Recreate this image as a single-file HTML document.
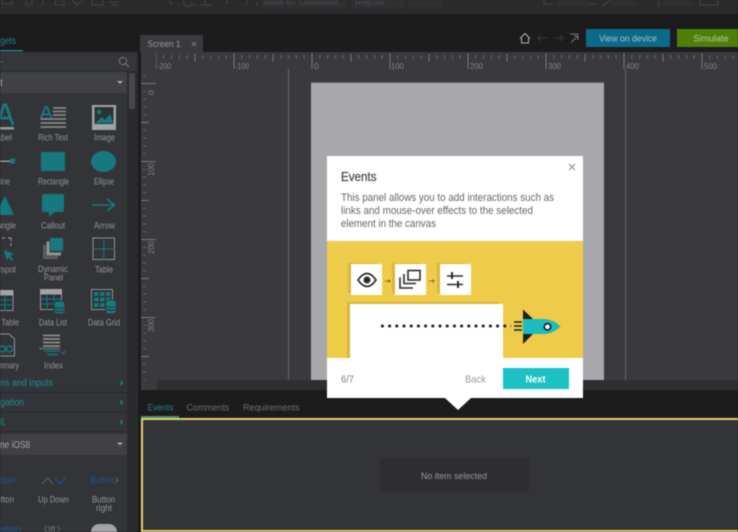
<!DOCTYPE html>
<html><head><meta charset="utf-8"><title>Events</title>
<style>
html,body{margin:0;padding:0;width:738px;height:532px;overflow:hidden;background:#1c1c1d}
svg{display:block;position:absolute;left:0;top:0;filter:blur(.45px)}
text{font-family:"Liberation Sans",sans-serif}
.l{font-size:9px;fill:#939496}
.t{font-size:10.5px;fill:#1f8f90}
.r{font-size:8.5px;fill:#838387}
</style></head><body>
<svg width="738" height="532" viewBox="0 0 738 532" xmlns="http://www.w3.org/2000/svg">
<defs>
<pattern id="hm" x="311.5" y="0" width="7.8" height="10" patternUnits="userSpaceOnUse"><rect width="1" height="10" fill="#636367"/></pattern>
<pattern id="h5" x="311.5" y="0" width="39" height="10" patternUnits="userSpaceOnUse"><rect width="1" height="10" fill="#77777b"/></pattern>
<pattern id="h1" x="311.5" y="0" width="78" height="20" patternUnits="userSpaceOnUse"><rect width="1" height="20" fill="#77777b"/></pattern>
<pattern id="vm" x="0" y="83" width="10" height="7.8" patternUnits="userSpaceOnUse"><rect width="10" height="1" fill="#636367"/></pattern>
<pattern id="v5" x="0" y="83" width="10" height="39" patternUnits="userSpaceOnUse"><rect width="10" height="1" fill="#77777b"/></pattern>
<pattern id="v1" x="0" y="83" width="20" height="78" patternUnits="userSpaceOnUse"><rect width="20" height="1" fill="#77777b"/></pattern>
</defs>

<!-- backgrounds -->
<rect width="738" height="532" fill="#1c1c1d"/>
<rect width="738" height="14" fill="#2b2b2d"/>

<!-- top toolbar -->
<g fill="none" stroke="#414144" stroke-width="1.2">
<path d="M2 0V4H12V0M26 0V5L32 4V0M43 0V5M55 0H64V5H55ZM72 0L78 5M84 0L76 5M92 0V5H103V0M110 2H118M112 5H118"/>
<path d="M169 0L172 5M184 0A4 4 0 0 0 192 4L196 6M205 0V4M200 5H212"/>
<path d="M227 0V4M247 0V5M257 2V6M268 0V4"/>
<path d="M544 0V4H552M566 0V4H570M587 4H597M610 0L603 6M636 0V5M660 0A5 5 0 0 0 659 7M700 0V5H718V0"/>
</g>
<rect x="261" y="0" width="84" height="8" fill="#303033"/>
<rect x="352" y="0" width="52" height="8" fill="#303033"/>
<rect x="408" y="0" width="34" height="8" fill="#303033"/>
<rect x="558" y="0" width="30" height="6" fill="#303033"/>
<rect x="611" y="0" width="26" height="6" fill="#303033"/>
<rect x="663" y="0" width="30" height="6" fill="#303033"/>
<text x="264" y="5" font-size="8.5" fill="#4a4a4e" textLength="74" lengthAdjust="spacingAndGlyphs">Abadi MT Condensed</text>
<text x="355" y="5" font-size="8.5" fill="#4a4a4e">Regular</text>

<!-- left panel -->
<text x="0" y="44" font-size="10.5" fill="#1a8485" textLength="16" lengthAdjust="spacingAndGlyphs">gets</text>
<rect x="0" y="50" width="23" height="1.500" fill="#1a8485"/>
<rect x="0" y="52" width="138" height="480" fill="#2a2b2e"/>
<rect x="0" y="52" width="137" height="19" fill="#353639"/>
<rect x="0" y="72" width="127" height="460" fill="#333438"/>
<rect x="0" y="72" width="127" height="21" fill="#404144"/>
<path d="M0 62H3" stroke="#157b7c" stroke-width="1"/>
<circle cx="123" cy="61" r="3.600" fill="none" stroke="#77787a" stroke-width="1"/><path d="M125.600 63.600L129 67" stroke="#77787a" stroke-width="1"/>
<text x="0" y="86" font-size="10" fill="#a4a5a7">t</text>
<path d="M117 81H123L120 84Z" fill="#a4a5a7"/>
<rect x="129" y="73" width="6" height="36" fill="#47484b"/>

<!-- row 1 -->
<path d="M-3 125L4 105H6L13 125M0 118H10" fill="none" stroke="#17797f" stroke-width="2.800"/>
<rect x="0" y="127" width="14" height="2.500" fill="#97989a"/>
<text x="-8" y="140.500" class="l" textLength="20" lengthAdjust="spacingAndGlyphs">Label</text>
<path d="M41 118L45.500 107H47L51.500 118M43 114.500H49.500" fill="none" stroke="#17797f" stroke-width="1.900"/>
<path d="M53 108H66M53 111.500H66M53 115H66M40.500 119H66M40.500 123H66M40.500 127H66" stroke="#8f9092" stroke-width="1.600"/>
<text x="38" y="140.500" class="l" textLength="30" lengthAdjust="spacingAndGlyphs">Rich Text</text>
<rect x="92" y="105" width="24" height="25" fill="#a2a3a5"/>
<rect x="94.500" y="107" width="19" height="17" fill="#2c3336"/>
<path d="M95 123L102 117L105 120L110 114L113.500 123Z" fill="#17797f"/><circle cx="99" cy="112" r="2.200" fill="#17797f"/>
<text x="94" y="140.500" class="l" textLength="21" lengthAdjust="spacingAndGlyphs">Image</text>

<!-- row 2 -->
<rect x="0" y="160.500" width="11" height="1.500" fill="#97989a"/><rect x="10" y="158.500" width="5" height="5" fill="#17797f"/>
<text x="-4" y="184.500" class="l" textLength="14" lengthAdjust="spacingAndGlyphs">Line</text>
<rect x="41" y="152" width="24" height="19" fill="#17797f"/>
<text x="38" y="184.500" class="l" textLength="31" lengthAdjust="spacingAndGlyphs">Rectangle</text>
<ellipse cx="103.500" cy="161.500" rx="12.500" ry="10.500" fill="#17797f"/>
<text x="94" y="184.500" class="l" textLength="20" lengthAdjust="spacingAndGlyphs">Ellipse</text>

<!-- row 3 -->
<path d="M-5 215L5 196L14 215Z" fill="#17797f"/>
<text x="-11" y="228.500" class="l" textLength="27" lengthAdjust="spacingAndGlyphs">Triangle</text>
<path d="M44 194H62Q64 194 64 196V210Q64 212 62 212H55L49 216.500V212H44Q42 212 42 210V196Q42 194 44 194Z" fill="#17797f"/>
<text x="41" y="228.500" class="l" textLength="24" lengthAdjust="spacingAndGlyphs">Callout</text>
<path d="M92 205H114M107 199L114.500 205L107 211" fill="none" stroke="#17797f" stroke-width="1.600"/>
<text x="94" y="228.500" class="l" textLength="21" lengthAdjust="spacingAndGlyphs">Arrow</text>

<!-- row 4 -->
<path d="M2 238H5M8 238H11V241M11 243V246" fill="none" stroke="#8f9092" stroke-width="1.200"/>
<path d="M4 250L14 254L10 256L13.500 260L12 261L8.500 257L7 261Z" fill="#17797f"/>
<text x="-11" y="272.500" class="l" textLength="27" lengthAdjust="spacingAndGlyphs">Hotspot</text>
<path d="M43 245H46V256H58V259H43Z" fill="#5b5c5f"/>
<path d="M46.500 241.500H49.500V252.500H61V255.500H46.500Z" fill="#929395"/>
<rect x="50" y="238" width="13" height="13" fill="#17797f"/>
<text x="38" y="272" class="l" textLength="30" lengthAdjust="spacingAndGlyphs">Dynamic</text>
<text x="44" y="280.500" class="l" textLength="19" lengthAdjust="spacingAndGlyphs">Panel</text>
<rect x="93" y="238" width="21.500" height="21.500" fill="none" stroke="#8f9092" stroke-width="1"/>
<path d="M103.800 238V260M93 249H115" stroke="#17797f" stroke-width="1"/>
<text x="95" y="272.500" class="l" textLength="18" lengthAdjust="spacingAndGlyphs">Table</text>

<!-- row 5 -->
<rect x="-6" y="290.500" width="19" height="20" fill="#2c3336" stroke="#8f9092"/>
<rect x="-6" y="290" width="19" height="5.500" fill="#a2a3a5"/>
<path d="M-6 300H13M-6 305H13M5 295V311" stroke="#17797f"/>
<text x="-31" y="325.500" class="l" textLength="50" lengthAdjust="spacingAndGlyphs">Repeater Table</text>
<rect x="40.500" y="289.500" width="21" height="20" fill="#2c3336" stroke="#8f9092"/>
<rect x="40" y="289" width="22" height="5.500" fill="#a2a3a5"/>
<path d="M41 299H62M41 304H62M47 295V310M54 295V310" stroke="#17797f"/>
<path d="M54 304Q54 301 59.500 301Q65 301 65 304V312Q65 314 59.500 314Q54 314 54 312Z" fill="#17797f" stroke="#333438"/>
<path d="M54 307Q59.500 310 65 307M54 310Q59.500 313 65 310" fill="none" stroke="#333438"/>
<text x="39" y="325.500" class="l" textLength="28" lengthAdjust="spacingAndGlyphs">Data List</text>
<rect x="91.500" y="289.500" width="21" height="20" fill="#2c3336" stroke="#8f9092"/>
<g fill="#17797f"><rect x="94" y="292" width="4.500" height="4"/><rect x="100" y="292" width="4.500" height="4"/><rect x="106" y="292" width="4.500" height="4"/><rect x="94" y="297.500" width="4.500" height="4"/><rect x="100" y="297.500" width="4.500" height="4"/><rect x="106" y="297.500" width="4.500" height="4"/><rect x="94" y="303" width="4.500" height="4"/><rect x="100" y="303" width="4.500" height="4"/></g>
<path d="M105.500 303Q105.500 300 111 300Q116.500 300 116.500 303V311Q116.500 314 111 314Q105.500 314 105.500 311Z" fill="#17797f" stroke="#333438"/>
<path d="M105.500 306Q111 309 116.500 306M105.500 309Q111 312 116.500 309" fill="none" stroke="#333438"/>
<text x="88" y="325.500" class="l" textLength="32" lengthAdjust="spacingAndGlyphs">Data Grid</text>

<!-- row 6 -->
<path d="M-3 334H9L14.500 339V356H-3Z" fill="none" stroke="#8f9092" stroke-width="1"/>
<circle cx="2.500" cy="349" r="3" fill="none" stroke="#17797f" stroke-width="1.500"/><circle cx="9.500" cy="349" r="3" fill="none" stroke="#17797f" stroke-width="1.500"/>
<text x="-11" y="368.500" class="l" textLength="30" lengthAdjust="spacingAndGlyphs">Summary</text>
<path d="M43 335.500H60M43 339H60M43 342.500H60M43 346H60" stroke="#97989a" stroke-width="1.600"/>
<path d="M39 348.500H60" stroke="#6b6c6e" stroke-width="1.500"/>
<path d="M44 351H60M47 354.500H58" stroke="#17797f" stroke-width="1.500"/>
<path d="M61 352L63 354L66 350" fill="none" stroke="#17797f"/>
<text x="44" y="368.500" class="l" textLength="19" lengthAdjust="spacingAndGlyphs">Index</text>

<!-- sections -->
<path d="M0 392.500H127M0 412H127M0 431.500H127" stroke="#292a2c" stroke-width="1"/>
<text x="0" y="386" class="t" textLength="53" lengthAdjust="spacingAndGlyphs">ns and inputs</text>
<text x="0" y="405.500" class="t" textLength="24" lengthAdjust="spacingAndGlyphs">gation</text>
<text x="0" y="425" class="t" textLength="6" lengthAdjust="spacingAndGlyphs">IL</text>
<path d="M120.500 380V386L123.500 383ZM120.500 399.500V405.500L123.500 402.500ZM120.500 419V425L123.500 422Z" fill="#157b7c"/>
<rect x="0" y="434" width="127" height="21" fill="#404144"/>
<text x="0" y="448" font-size="10.500" fill="#a4a5a7" textLength="30" lengthAdjust="spacingAndGlyphs">ne iOS8</text>
<path d="M117 442.500H123L120 445.500Z" fill="#a4a5a7"/>

<!-- iOS row -->
<text x="0" y="483" font-size="9.500" fill="#1f5493" textLength="15" lengthAdjust="spacingAndGlyphs">tton</text>
<path d="M42 484L47.500 478L53 484" fill="none" stroke="#5d5e60" stroke-width="1"/>
<path d="M54.500 478L60 484L65.500 478" fill="none" stroke="#1f5493" stroke-width="1"/>
<text x="90" y="483" font-size="9.500" fill="#1f5493" textLength="24" lengthAdjust="spacingAndGlyphs">Button</text>
<path d="M115 477.500L118 480L115 483" fill="none" stroke="#5d5e60"/>
<text x="-9" y="502.500" class="l" textLength="23" lengthAdjust="spacingAndGlyphs">Button</text>
<text x="38" y="502.500" class="l" textLength="31" lengthAdjust="spacingAndGlyphs">Up Down</text>
<text x="92" y="502.500" class="l" textLength="23" lengthAdjust="spacingAndGlyphs">Button</text>
<text x="96" y="511" class="l" textLength="16" lengthAdjust="spacingAndGlyphs">right</text>
<text x="0" y="532" font-size="9.500" fill="#1f5493">utton</text>
<text x="44" y="532" font-size="8.500" fill="#77787a">Off</text><path d="M57 526L60 529L57 532" fill="none" stroke="#5d5e60"/>
<rect x="91" y="524" width="26" height="16" rx="8" fill="#a2a3a5"/>

<!-- tab bar & canvas -->
<rect x="140" y="35" width="63" height="17" fill="#3a3a3e"/>
<text x="147.500" y="47" font-size="9.500" fill="#9a9a9d" textLength="33" lengthAdjust="spacingAndGlyphs">Screen 1</text>
<path d="M192 42L196 46M196 42L192 46" stroke="#8a8a8d" stroke-width=".8"/>
<rect x="141" y="52" width="597" height="328" fill="#3a393e"/>

<!-- rulers -->
<rect x="156" y="55" width="582" height="4" fill="url(#hm)"/>
<rect x="156" y="54" width="582" height="8" fill="url(#h5)"/>
<rect x="156" y="53" width="582" height="16" fill="url(#h1)"/>
<rect x="143" y="70" width="3" height="310" fill="url(#vm)"/>
<rect x="141" y="70" width="8" height="310" fill="url(#v5)"/>
<rect x="141" y="70" width="15" height="310" fill="url(#v1)"/>
<text x="157" y="69" class="r" textLength="14" lengthAdjust="spacingAndGlyphs">-200</text>
<text x="235" y="69" class="r" textLength="14" lengthAdjust="spacingAndGlyphs">-100</text>
<text x="314" y="69" class="r">0</text>
<text x="391" y="69" class="r" textLength="13" lengthAdjust="spacingAndGlyphs">100</text>
<text x="470" y="69" class="r" textLength="13" lengthAdjust="spacingAndGlyphs">200</text>
<text x="548" y="69" class="r" textLength="13" lengthAdjust="spacingAndGlyphs">300</text>
<text x="626" y="69" class="r" textLength="13" lengthAdjust="spacingAndGlyphs">400</text>
<text x="704" y="69" class="r" textLength="13" lengthAdjust="spacingAndGlyphs">500</text>
<text transform="translate(154,176) rotate(-90)" class="r" textLength="13" lengthAdjust="spacingAndGlyphs">100</text>
<text transform="translate(154,254) rotate(-90)" class="r" textLength="13" lengthAdjust="spacingAndGlyphs">200</text>
<text transform="translate(154,332) rotate(-90)" class="r" textLength="13" lengthAdjust="spacingAndGlyphs">300</text>
<text transform="translate(154,95) rotate(-90)" class="r">0</text>

<!-- guides + page -->
<path d="M288.500 69V380M625.500 69V380" stroke="#69696d" stroke-width="1"/>
<rect x="311" y="83" width="293" height="297" fill="#a8a7ac"/>
<rect x="311" y="82" width="293" height="1" fill="#5e5e62"/>

<!-- bottom strips -->
<rect x="141" y="380" width="597" height="10" fill="#2f2f31"/>
<rect x="141" y="380" width="16" height="10" fill="#3a393e"/>
<rect x="141" y="390" width="597" height="28" fill="#1c1c1d"/>
<text x="147.500" y="410.500" font-size="9.500" fill="#1a8485" textLength="26" lengthAdjust="spacingAndGlyphs">Events</text>
<text x="186.500" y="410.500" font-size="9.500" fill="#6d6e70" textLength="43" lengthAdjust="spacingAndGlyphs">Comments</text>
<text x="243" y="410.500" font-size="9.500" fill="#6d6e70" textLength="56.500" lengthAdjust="spacingAndGlyphs">Requirements</text>
<rect x="141" y="416" width="38" height="2" fill="#3f8f78"/>

<!-- yellow frame -->
<rect x="142" y="419" width="600" height="112" fill="#333438" stroke="#e4cf6c" stroke-width="2"/>
<rect x="380" y="458" width="149" height="34" fill="#2e2e30"/>
<text x="421" y="479" font-size="9" fill="#98989b" textLength="66" lengthAdjust="spacingAndGlyphs">No item selected</text>

<!-- modal -->
<rect x="327" y="156" width="256" height="242" fill="#fff"/>
<path d="M445 398H471L458 410Z" fill="#fff"/>
<text x="341" y="181" font-size="13" fill="#4b4b50" stroke="#4b4b50" stroke-width=".25" textLength="35.500" lengthAdjust="spacingAndGlyphs">Events</text>
<path d="M569 164L575 170M575 164L569 170" stroke="#85858a" stroke-width=".9"/>
<g font-size="11" fill="#66666b">
<text x="341" y="201" textLength="213" lengthAdjust="spacingAndGlyphs">This panel allows you to add interactions such as</text>
<text x="341" y="214" textLength="192" lengthAdjust="spacingAndGlyphs">links and mouse-over effects to the selected</text>
<text x="341" y="227" textLength="95" lengthAdjust="spacingAndGlyphs">element in the canvas</text>
</g>
<rect x="327" y="241" width="256" height="117" fill="#eecb49"/>

<!-- illustration boxes -->
<rect x="348" y="263" width="30" height="30" fill="#d9b63f"/><rect x="351" y="264" width="31" height="31" fill="#fff"/>
<rect x="392" y="263" width="30" height="30" fill="#d9b63f"/><rect x="395" y="264" width="31" height="31" fill="#fff"/>
<rect x="437" y="263" width="30" height="30" fill="#d9b63f"/><rect x="440" y="264" width="31" height="31" fill="#fff"/>
<!-- eye -->
<path d="M358 280Q367 267 376 280Q367 293 358 280Z" fill="none" stroke="#2c2c30" stroke-width="1.700"/>
<circle cx="367" cy="280" r="3.500" fill="#2c2c30"/>
<!-- layers -->
<rect x="408" y="270.500" width="12" height="9.500" fill="none" stroke="#2c2c30" stroke-width="1.600"/>
<path d="M404 274V283.500H416M400 277.500V288H413" fill="none" stroke="#2c2c30" stroke-width="1.600"/>
<!-- sliders -->
<path d="M447 276H463M447 284.500H463" stroke="#2c2c30" stroke-width="1.600"/>
<path d="M452 272V279M458 281V288" stroke="#2c2c30" stroke-width="2"/>
<!-- small arrows -->
<path d="M385 281H390M388.500 279.500L390 281L388.500 282.500M429 281H434M432.500 279.500L434 281L432.500 282.500" fill="none" stroke="#6a5a20" stroke-width=".8"/>
<!-- big white -->
<rect x="347" y="302" width="152" height="56" fill="#d9b63f"/>
<rect x="350" y="304" width="153" height="54" fill="#fff"/>
<!-- dots -->
<path d="M381 326H511" stroke="#1f1f22" stroke-width="2.800" stroke-dasharray="2.800 4.400"/>
<!-- rocket -->
<path d="M514 322H522M514 326H522M514 330H522" stroke="#1f1f22" stroke-width="1.400"/>
<path d="M523 309.500L533 319H523ZM523 344L533 334H523Z" fill="#1f1f22"/>
<path d="M523 319H546Q554 320 560.500 326.500Q554 333 546 334H523Z" fill="#1cbcc0"/>
<circle cx="547.500" cy="326.800" r="3.200" fill="#fff" stroke="#1f1f22" stroke-width="1.700"/>

<!-- footer -->
<text x="341" y="382.500" font-size="10.500" fill="#7c7c80" textLength="13" lengthAdjust="spacingAndGlyphs">6/7</text>
<text x="465" y="382.500" font-size="10.500" fill="#97979b" textLength="21" lengthAdjust="spacingAndGlyphs">Back</text>
<rect x="503" y="368" width="66" height="21" fill="#1cc1c4"/>
<text x="525.500" y="382.500" font-size="10.500" font-weight="bold" fill="#fff" textLength="20" lengthAdjust="spacingAndGlyphs">Next</text>

<!-- top right -->
<path d="M520 38.500L525 33.500L530 38.500M521.500 38V43H528.500V38" fill="none" stroke="#b0b0b3" stroke-width="1"/>
<path d="M538 38H547M541 35L538 38L541 41M554 38H563M560 35L563 38L560 41" fill="none" stroke="#38383c" stroke-width="1"/>
<path d="M570 34H579M571 42.500L578 36M574 36H578V40" fill="none" stroke="#77777b" stroke-width="1"/>
<rect x="586" y="29" width="84" height="18" fill="#0b6a88"/>
<text x="599" y="41.500" font-size="9.500" fill="#9fc3d0" textLength="58" lengthAdjust="spacingAndGlyphs">View on device</text>
<rect x="677" y="29" width="61" height="18" fill="#4e8009"/>
<text x="693.500" y="41.500" font-size="9.500" fill="#b2cd92" textLength="35" lengthAdjust="spacingAndGlyphs">Simulate</text>
</svg>
</body></html>
